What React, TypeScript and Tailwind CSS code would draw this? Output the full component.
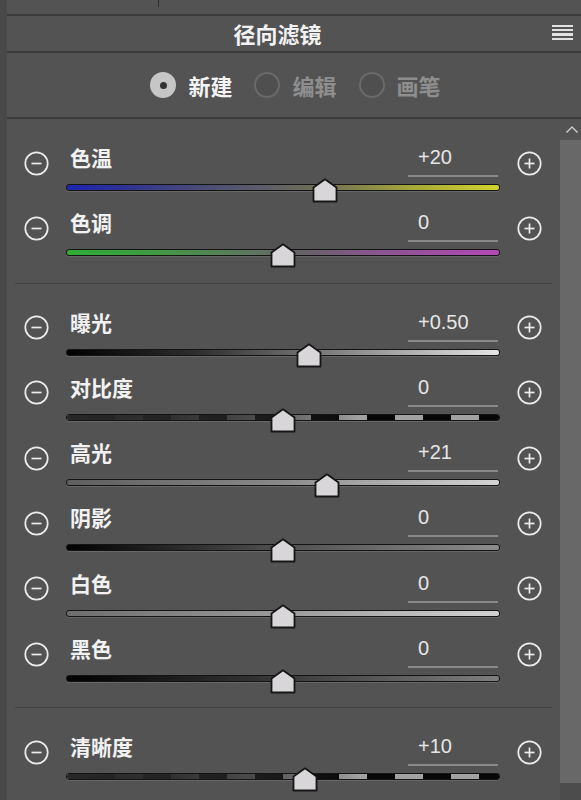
import { clsx } from "clsx";

type Row = {
  label: string;
  value: string;
  pct: number;
  track: string;
  striped?: boolean;
};

const GROUPS: Row[][] = [
  [
    {
      label: "色温",
      value: "+20",
      pct: 59.7,
      track:
        "bg-[linear-gradient(to_right,#1b27b0,#2d3196_12%,#4a4a78_30%,#606066_48%,#77774f_62%,#a6a83a_80%,#d2d32c)]",
    },
    {
      label: "色调",
      value: "0",
      pct: 50,
      track:
        "bg-[linear-gradient(to_right,#2fae36,#3f9a42_20%,#5b7a5c_40%,#686068_55%,#8a5590_72%,#b447b8)]",
    },
  ],
  [
    {
      label: "曝光",
      value: "+0.50",
      pct: 56,
      track: "bg-[linear-gradient(to_right,#000,#2e2e2e_30%,#7c7c7c_60%,#bdbdbd_85%,#e6e6e6)]",
    },
    { label: "对比度", value: "0", pct: 50, track: "", striped: true },
    {
      label: "高光",
      value: "+21",
      pct: 60.1,
      track: "bg-[linear-gradient(to_right,#5e5e5e,#8a8a8a_50%,#d4d4d4)]",
    },
    {
      label: "阴影",
      value: "0",
      pct: 50,
      track: "bg-[linear-gradient(to_right,#000,#4a4a4a_45%,#8c8c8c)]",
    },
    {
      label: "白色",
      value: "0",
      pct: 50,
      track: "bg-[linear-gradient(to_right,#6e6e6e,#9a9a9a_50%,#d2d2d2)]",
    },
    {
      label: "黑色",
      value: "0",
      pct: 50,
      track: "bg-[linear-gradient(to_right,#000,#3a3a3a_50%,#7e7e7e)]",
    },
  ],
  [{ label: "清晰度", value: "+10", pct: 55.1, track: "", striped: true }],
];

function RoundIcon({ plus }: { plus?: boolean }) {
  return (
    <svg width="25" height="25" viewBox="0 0 25 25" fill="none">
      <circle cx="12.5" cy="12.5" r="11.2" stroke="#ececec" strokeWidth="1.7" />
      <line x1="7.5" y1="12.5" x2="17.5" y2="12.5" stroke="#ececec" strokeWidth="1.7" />
      {plus && <line x1="12.5" y1="7.5" x2="12.5" y2="17.5" stroke="#ececec" strokeWidth="1.7" />}
    </svg>
  );
}

function Thumb({ pct }: { pct: number }) {
  return (
    <svg
      width="26"
      height="25"
      viewBox="0 0 26 25"
      className="absolute top-[1px] -translate-x-1/2"
      style={{ left: `${pct}%` }}
    >
      <path
        d="M1.5 9.5 L13 1.3 L24.5 9.5 L24.5 23.5 L1.5 23.5 Z"
        fill="#d9d6d9"
        stroke="#161616"
        strokeWidth="1.8"
        strokeLinejoin="round"
      />
    </svg>
  );
}

function Track({ row }: { row: Row }) {
  return (
    <div className="relative h-[26px]">
      <div
        className={clsx(
          "absolute left-0 right-0 top-[7px] h-[7px] rounded-[3px] border border-[#141414] overflow-hidden shadow-[0_1px_0_#676767]",
          row.track
        )}
      >
        {row.striped && (
          <>
            <div className="absolute inset-0 bg-[repeating-linear-gradient(to_right,#a2a2a2_0px,#a2a2a2_20px,#070707_20px,#070707_48px,#a2a2a2_48px,#a2a2a2_56px)]" />
            <div className="absolute inset-0 bg-[linear-gradient(to_right,rgba(38,38,38,1),rgba(38,38,38,0.9)_25%,rgba(38,38,38,0.68)_45%,rgba(38,38,38,0.3)_58%,rgba(38,38,38,0)_68%)]" />
          </>
        )}
      </div>
      <Thumb pct={row.pct} />
    </div>
  );
}

function SliderRow({ row }: { row: Row }) {
  return (
    <div className="flex h-[65.3px] shrink-0 items-start">
      <div className="ml-[17px] mt-[9.5px] w-[25px]">
        <RoundIcon />
      </div>
      <div className="ml-[17px] w-[434px]">
        <div className="flex h-[36px] items-start">
          <span className="pl-[4px] text-[21px] leading-[32px] font-semibold text-[#f2f2f2] font-['Noto_Sans_CJK_SC',sans-serif]">
            {row.label}
          </span>
          <div className="ml-auto mr-[2px] h-[36px] w-[90px] border-b-2 border-[#8a8a8a] pl-[10px] text-[20px] leading-[32px] text-[#e6e6e6] font-['Liberation_Sans',Arial,sans-serif]">
            {row.value}
          </div>
        </div>
        <Track row={row} />
      </div>
      <div className="ml-[17px] mt-[9.5px] w-[25px]">
        <RoundIcon plus />
      </div>
    </div>
  );
}

function Radio({ label, on }: { label: string; on?: boolean }) {
  return (
    <div className="flex items-center gap-[12px]">
      {on ? (
        <span className="flex h-[26px] w-[26px] items-center justify-center rounded-full bg-[#c6c6c6]">
          <span className="h-[7px] w-[7px] rounded-full bg-[#333]" />
        </span>
      ) : (
        <span className="h-[26px] w-[26px] rounded-full border-2 border-[#6a6a6a] bg-[#4f4f4f]" />
      )}
      <span
        className={clsx(
          "text-[22px] leading-none font-semibold",
          on ? "text-[#f4f4f4]" : "text-[#8e8e8e]"
        )}
      >
        {label}
      </span>
    </div>
  );
}

export default function App() {
  return (
    <div className="flex h-[800px] w-[581px] overflow-hidden bg-[#535353] font-['Noto_Sans_CJK_SC',sans-serif]">
      <div className="w-[7px] shrink-0 bg-[#484848]" />
      <div className="flex flex-1 flex-col">
        <div className="h-[14px] shrink-0">
          <div className="h-[7px] w-[152px] border-r border-[#2e2e2e]" />
        </div>
        <div className="h-[2px] shrink-0 bg-[#3c3c3c]" />
        <div className="flex h-[35px] shrink-0 items-center pr-[33px]">
          <span className="mx-auto text-[22px] font-semibold text-[#f2f2f2]">径向滤镜</span>
          <div className="absolute left-[552px] top-[25px] flex w-[21px] flex-col gap-[2px]">
            <span className="h-[2.2px] bg-[#e2e2e2]" />
            <span className="h-[2.2px] bg-[#e2e2e2]" />
            <span className="h-[2.2px] bg-[#e2e2e2]" />
            <span className="h-[2.2px] bg-[#e2e2e2]" />
          </div>
        </div>
        <div className="h-[2px] shrink-0 bg-[#3c3c3c]" />
        <div className="flex h-[64px] shrink-0 items-center justify-center gap-[22px] pl-[3px]">
          <Radio label="新建" on />
          <Radio label="编辑" />
          <Radio label="画笔" />
        </div>
        <div className="h-[2px] shrink-0 bg-[#3c3c3c]" />
        <div className="flex shrink-0">
          <div className="w-[553px]">
            {GROUPS.map((g, gi) => (
              <div key={gi}>
                {gi > 0 && <div className="mx-[8px] h-[1px] bg-[#444]" />}
                <div className={clsx("pt-[22px]", gi === 0 ? "pb-[11px]" : "pb-[10px]")}>
                  {g.map((r) => (
                    <SliderRow key={r.label} row={r} />
                  ))}
                </div>
              </div>
            ))}
          </div>
          <div className="flex w-[21px] flex-col">
            <div className="flex h-[21px] shrink-0 items-center justify-center pl-[3px]">
              <svg width="14" height="9" viewBox="0 0 14 9" fill="none">
                <path d="M1.5 7.5 L7 2 L12.5 7.5" stroke="#cfcfcf" strokeWidth="1.4" />
              </svg>
            </div>
            <div className="h-[643px] shrink-0 bg-[#686868]" />
            <div className="flex-1 bg-[#4c4c4c]" />
          </div>
        </div>
      </div>
    </div>
  );
}
